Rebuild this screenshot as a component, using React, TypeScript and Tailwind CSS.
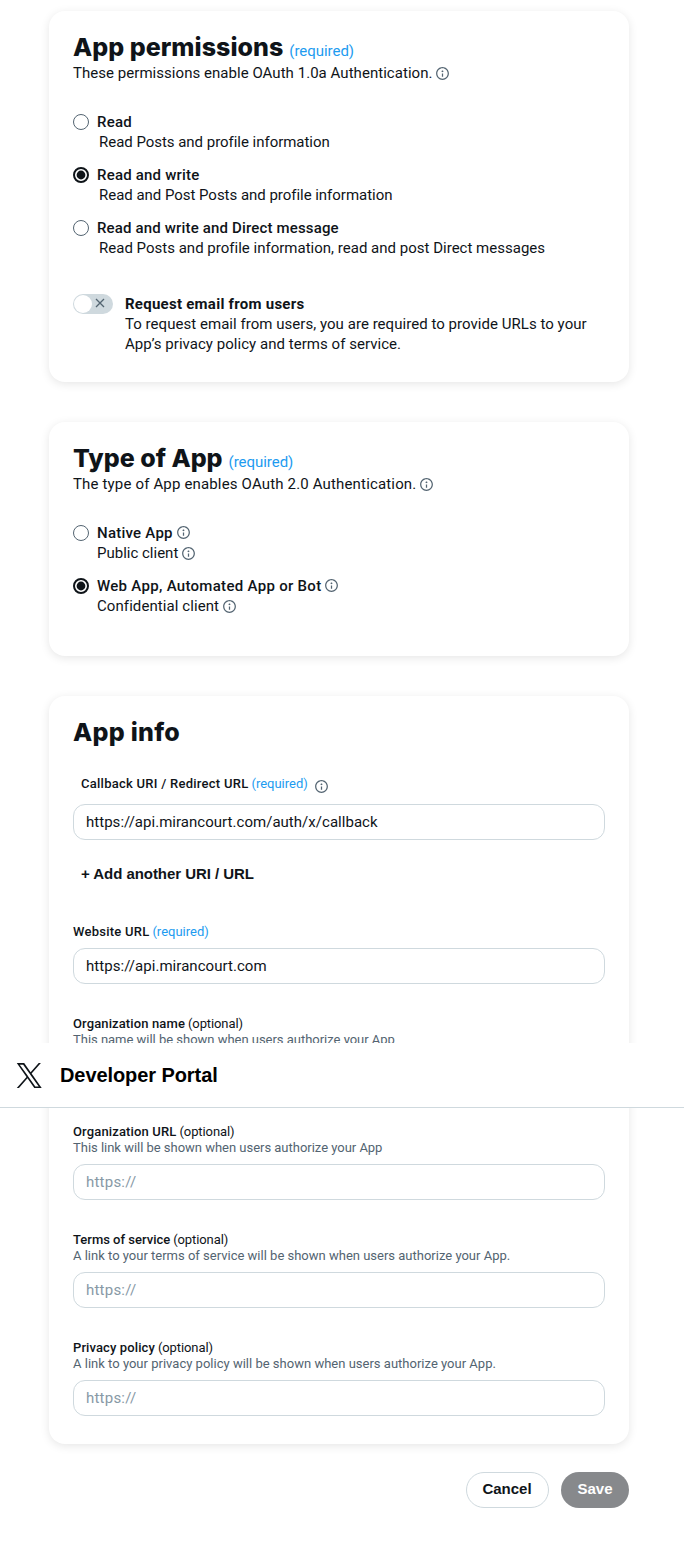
import type { ReactNode } from "react";

function InfoIcon({ className = "" }: { className?: string }) {
  return (
    <svg viewBox="0 0 24 24" className={`shrink-0 size-[15px] fill-[#536471] ${className}`} aria-hidden="true">
      <path d="M13.5 8.5c0 .83-.67 1.5-1.5 1.5s-1.5-.67-1.5-1.5S11.17 7 12 7s1.5.67 1.5 1.5zM13 17v-5h-2v5h2zm-1 5.25c5.66 0 10.25-4.59 10.25-10.25S17.66 1.75 12 1.75 1.75 6.34 1.75 12 6.34 22.25 12 22.25zM20.25 12c0 4.56-3.69 8.25-8.25 8.25S3.75 16.56 3.75 12 7.44 3.75 12 3.75s8.25 3.69 8.25 8.25z" />
    </svg>
  );
}

function Card({ className = "", children }: { className?: string; children: ReactNode }) {
  return (
    <section className={`rounded-2xl bg-white px-6 pt-6 shadow-[0_2px_10px_rgba(0,0,0,0.1)] ${className}`}>
      {children}
    </section>
  );
}

function Heading({ children, required, className = "" }: { children: ReactNode; required?: boolean; className?: string }) {
  return (
    <div className="flex h-7 items-baseline whitespace-nowrap leading-6">
      <h2 className={`font-['Inter',sans-serif] text-[25px] font-extrabold ${className}`}>{children}</h2>
      {required && <span className="ml-1.5 text-[15px] tracking-[-0.03px] text-[#1d9bf0]">(required)</span>}
    </div>
  );
}

function Radio({ checked }: { checked?: boolean }) {
  return checked ? (
    <svg viewBox="0 0 16 16" className="mt-0.5 size-4 shrink-0" aria-hidden="true">
      <circle cx="8" cy="8" r="7" fill="none" stroke="#0f1419" strokeWidth="2" />
      <circle cx="8" cy="8" r="4.4" fill="#0f1419" />
    </svg>
  ) : (
    <span className="mt-0.5 size-4 shrink-0 rounded-full border border-[#536471]" />
  );
}

function Option({ checked, title, children }: { checked?: boolean; title: ReactNode; children: ReactNode }) {
  return (
    <div className="flex gap-2">
      <Radio checked={checked} />
      <div className="flex flex-col">
        <div className="flex h-5 font-medium">{title}</div>
        <div className="flex h-5">{children}</div>
      </div>
    </div>
  );
}

function TextBox({ value, placeholder, className = "" }: { value?: string; placeholder?: string; className?: string }) {
  return (
    <div className={`flex h-9 items-center rounded-xl border border-[#cfd9de] px-3 ${className}`}>
      {value ?? <span className="tracking-[0.22px] text-[#8899a6]">{placeholder}</span>}
    </div>
  );
}

function OptionalField({ label, help, placeholder }: { label: ReactNode; help: ReactNode; placeholder?: string }) {
  return (
    <div className="mt-8 text-[13px] leading-4">
      <div className="flex gap-[3px]">
        {label}
        <span className="tracking-[-0.1px]">(optional)</span>
      </div>
      <div className="text-[#536471]">{help}</div>
      <div className="mt-2 text-[15px] leading-5">
        <TextBox placeholder={placeholder} />
      </div>
    </div>
  );
}

export default function App() {
  return (
    <div className="relative h-[1555px] w-[684px] overflow-hidden bg-white pt-[11px] pl-[49px] font-['Roboto',sans-serif] text-[15px] leading-5 whitespace-nowrap text-[#0f1419]">
      <div className="flex w-[580px] flex-col gap-10">
        <Card className="pb-7">
          <Heading required className="tracking-[0.03px]">App permissions</Heading>
          <div className="flex">
            <span className="tracking-[0.04px]">These permissions enable OAuth 1.0a Authentication.</span>
            <InfoIcon className="mt-[3px] ml-[3px]" />
          </div>
          <div className="mt-[29px] flex flex-col gap-[13px]">
            <Option title={<span className="tracking-[0.2px]">Read</span>}>
              <span className="ml-0.5 tracking-[-0.03px]">Read Posts and profile information</span>
            </Option>
            <Option checked title={<span className="tracking-[0.2px]">Read and write</span>}>
              <span className="ml-0.5 tracking-[-0.03px]">Read and Post Posts and profile information</span>
            </Option>
            <Option title={<span className="tracking-[0.16px]">Read and write and Direct message</span>}>
              <span className="ml-0.5 tracking-[0.01px]">Read Posts and profile information, read and post Direct messages</span>
            </Option>
          </div>
          <div className="mt-9 flex gap-3">
            <div className="flex h-5 w-10 items-center justify-between rounded-full bg-[#cfd9de] pr-2 pl-px">
              <span className="size-[18px] rounded-full bg-white" />
              <svg viewBox="0 0 10 10" className="mb-0.5 size-[10px] stroke-[#536471]" aria-hidden="true">
                <path d="M1 1l8 8M9 1L1 9" strokeWidth="1.3" fill="none" />
              </svg>
            </div>
            <div>
              <div className="font-bold tracking-[0.26px]">Request email from users</div>
              <div className="tracking-[0.04px]">To request email from users, you are required to provide URLs to your</div>
              <div className="tracking-[0.04px]">App’s privacy policy and terms of service.</div>
            </div>
          </div>
        </Card>

        <Card className="pb-10">
          <Heading required>Type of App</Heading>
          <div className="flex">
            <span className="tracking-[0.16px]">The type of App enables OAuth 2.0 Authentication.</span>
            <InfoIcon className="mt-[3px] ml-[3px]" />
          </div>
          <div className="mt-[29px] flex flex-col gap-[13px]">
            <Option
              title={
                <>
                  <span className="tracking-[0.24px]">Native App</span>
                  <InfoIcon className="mt-[2px] ml-[3px]" />
                </>
              }
            >
              <span>Public client</span>
              <InfoIcon className="mt-[3px] ml-[3px]" />
            </Option>
            <Option
              checked
              title={
                <>
                  <span className="tracking-[0.3px]">Web App, Automated App or Bot</span>
                  <InfoIcon className="mt-[2px] ml-[3px]" />
                </>
              }
            >
              <span className="tracking-[0.08px]">Confidential client</span>
              <InfoIcon className="mt-[3px] ml-[3px]" />
            </Option>
          </div>
        </Card>

        <Card className="pb-7">
          <Heading className="tracking-[0.27px]">App info</Heading>
          <div className="mt-7 ml-2 flex h-4 text-[13px] leading-4">
            <span className="font-medium tracking-[0.26px]">Callback URI / Redirect URL</span>
            <span className="ml-[3px] text-[#1d9bf0]">(required)</span>
            <InfoIcon className="mt-[3px] ml-1.5" />
          </div>
          <TextBox value="https://api.mirancourt.com/auth/x/callback" className="mt-3 tracking-[0.03px]" />
          <div className="mt-6 ml-2 font-['Liberation_Sans',sans-serif] font-bold tracking-[-0.05px]">+ Add another URI / URL</div>
          <div className="mt-10 flex text-[13px] leading-4">
            <span className="font-medium tracking-[0.24px]">Website URL</span>
            <span className="ml-[3px] text-[#1d9bf0]">(required)</span>
          </div>
          <TextBox value="https://api.mirancourt.com" className="mt-2 tracking-[0.05px]" />
          <OptionalField
            label={<span className="font-medium tracking-[0.12px]">Organization name</span>}
            help={<span className="tracking-[-0.02px]">This name will be shown when users authorize your App</span>}
          />
          <OptionalField
            label={<span className="font-medium tracking-[0.15px]">Organization URL</span>}
            help={<span className="tracking-[-0.02px]">This link will be shown when users authorize your App</span>}
            placeholder="https://"
          />
          <OptionalField
            label={<span className="font-medium">Terms of service</span>}
            help="A link to your terms of service will be shown when users authorize your App."
            placeholder="https://"
          />
          <OptionalField
            label={<span className="font-medium tracking-[0.11px]">Privacy policy</span>}
            help={<span className="tracking-[0.01px]">A link to your privacy policy will be shown when users authorize your App.</span>}
            placeholder="https://"
          />
        </Card>
      </div>

      <div className="mt-7 flex w-[580px] justify-end gap-3 font-['Liberation_Sans',sans-serif] font-bold">
        <button className="flex h-9 w-[83px] items-center justify-center rounded-full border border-[#cfd9de] pr-px pb-0.5">
          Cancel
        </button>
        <button className="flex h-9 w-[68px] items-center justify-center rounded-full bg-[#87898c] pb-0.5 text-white">
          Save
        </button>
      </div>

      <header className="absolute top-[1043px] left-0 flex h-[65px] w-full items-center border-b border-[#cfd9de] bg-white pl-4 text-black">
        <svg viewBox="-0.5 0 24.5 24" className="h-[25px] w-[26px] fill-[#0f1419]" aria-hidden="true">
          <path d="M14.258 10.152L23.176 0h-2.113l-7.747 8.813L7.133 0H0l9.352 13.328L0 23.973h2.113l8.176-9.309 6.531 9.309h7.133zm-2.895 3.293l-.949-1.328L2.875 1.56h3.246l6.086 8.523.945 1.328 7.91 11.078h-3.246z" />
        </svg>
        <h1 className="ml-[18px] font-['Liberation_Sans',sans-serif] text-[20px] font-bold tracking-[-0.08px]">Developer Portal</h1>
      </header>
    </div>
  );
}
